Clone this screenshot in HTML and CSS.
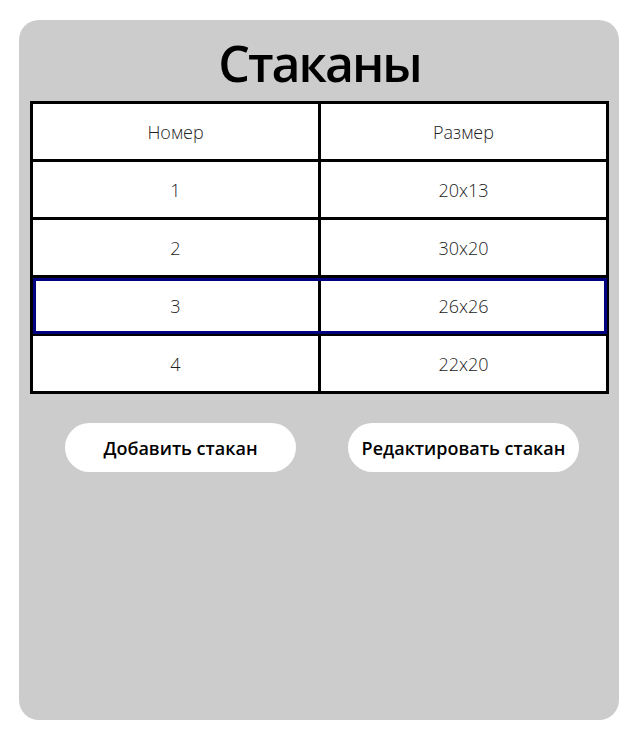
FILE: index.html
```html
<!DOCTYPE html>
<html>
  <head>
    <meta charset="UTF-8" />
    <title>Стаканы</title>
    <link rel="stylesheet" href="styles.css">
  </head>

  <body>
    <div class="glasses-container">
      <h1>Стаканы</h1>
      <table class="glasses-table">
        <tr>
          <td>Номер</td>
          <td>Размер</td>
        </tr>
        <tr>
          <td>1</td>
          <td>20x13</td>
        </tr>
        <tr>
          <td>2</td>
          <td>30x20</td>
        </tr>
        <tr class="selected">
          <td>3</td>
          <td>26x26</td>
        </tr>
        <tr>
          <td>4</td>
          <td>22x20</td>
        </tr>
      </table>
      <div class="glasses-buttons">
        <button>Добавить стакан</button>
        <button>Редактировать стакан</button>
      </div>
    </div>
  </body>
</html>
```

FILE: styles.css
```css
body {
  margin: 0;
  padding: 20px 0 0 19px;
  font-family: "Open Sans", "Noto Sans", sans-serif;
}

.glasses-container {
  width: 600px;
  height: 700px;
  box-sizing: border-box;
  background-color: #cccccc;
  border-radius: 20px;
  padding: 0 10px 0 11px;
}

.glasses-container h1 {
  margin: 0;
  padding-top: 18px;
  height: 81px;
  box-sizing: border-box;
  text-align: center;
  font-size: 50px;
  font-weight: 600;
  letter-spacing: -2px;
  line-height: 1;
  color: #000;
}

.glasses-table {
  width: 579px;
  border-collapse: collapse;
  background-color: #fff;
}

.glasses-table td {
  width: 50%;
  height: 55px;
  padding: 0;
  border: 3px solid #000;
  text-align: center;
  font-size: 18px;
  font-weight: 300;
  color: #222;
}

.glasses-table tr.selected {
  outline: 3px solid #000080;
  outline-offset: -4px;
}

.glasses-buttons {
  display: flex;
  gap: 52px;
  margin-top: 29px;
  padding-left: 35px;
}

.glasses-buttons button {
  width: 231px;
  height: 49px;
  border: none;
  border-radius: 25px;
  background-color: #fff;
  font-family: inherit;
  font-size: 18px;
  font-weight: 600;
  color: #000;
  cursor: pointer;
}
```
